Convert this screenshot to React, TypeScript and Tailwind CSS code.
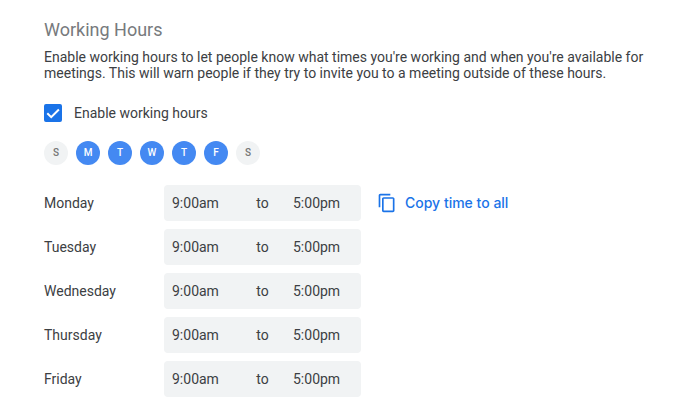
import React, { useState } from 'react';
import clsx from 'clsx';

type Day = {
  name: string;
  letter: string;
};

const DAYS: Day[] = [
  { name: 'Sunday', letter: 'S' },
  { name: 'Monday', letter: 'M' },
  { name: 'Tuesday', letter: 'T' },
  { name: 'Wednesday', letter: 'W' },
  { name: 'Thursday', letter: 'T' },
  { name: 'Friday', letter: 'F' },
  { name: 'Saturday', letter: 'S' },
];

type Hours = {
  start: string;
  end: string;
};

const CopyIcon: React.FC = () => (
  <svg viewBox="0 0 24 24" className="size-5 shrink-0" fill="currentColor" aria-hidden="true">
    <path d="M16 1H4C2.9 1 2 1.9 2 3v14h2V3h12V1zm3 4H8C6.9 5 6 5.9 6 7v14c0 1.1.9 2 2 2h11c1.1 0 2-.9 2-2V7c0-1.1-.9-2-2-2zm0 16H8V7h11v14z" />
  </svg>
);

type DayToggleProps = {
  day: Day;
  active: boolean;
  onClick: () => void;
};

const DayToggle: React.FC<Readonly<DayToggleProps>> = ({ day, active, onClick }) => (
  <button
    type="button"
    aria-label={day.name}
    aria-pressed={active}
    onClick={onClick}
    className={clsx(
      'flex size-6 items-center justify-center rounded-full text-[10px] font-medium',
      active ? 'bg-[#4489f2] text-white' : 'bg-[#f1f3f4] text-[#757575]',
    )}
  >
    {day.letter}
  </button>
);

type HoursRowProps = {
  day: string;
  hours: Hours;
  onChange: (hours: Hours) => void;
  onCopy?: () => void;
};

const HoursRow: React.FC<Readonly<HoursRowProps>> = ({ day, hours, onChange, onCopy }) => (
  <div className="flex items-center">
    <span className="w-[120px] shrink-0">{day}</span>
    <div className="flex h-9 items-center rounded bg-[#f1f3f4]">
      <input
        aria-label={`${day} start time`}
        value={hours.start}
        onChange={(e) => onChange({ ...hours, start: e.target.value })}
        className="h-9 w-[76px] bg-transparent pl-2 outline-none"
      />
      <span className="w-[45px] text-center">to</span>
      <input
        aria-label={`${day} end time`}
        value={hours.end}
        onChange={(e) => onChange({ ...hours, end: e.target.value })}
        className="h-9 w-[76px] bg-transparent pl-2 outline-none"
      />
    </div>
    {onCopy && (
      <button
        type="button"
        onClick={onCopy}
        className="ml-4 flex items-center gap-2 font-['Inter',sans-serif] text-sm font-medium text-[#1a73e8]"
      >
        <CopyIcon />
        Copy time to all
      </button>
    )}
  </div>
);

export default function App() {
  const [enabled, setEnabled] = useState(true);
  const [active, setActive] = useState([false, true, true, true, true, true, false]);
  const [hours, setHours] = useState<Hours[]>(DAYS.map(() => ({ start: '9:00am', end: '5:00pm' })));

  const toggleDay = (index: number) => setActive(active.map((on, i) => (i === index ? !on : on)));
  const updateHours = (index: number, next: Hours) => setHours(hours.map((h, i) => (i === index ? next : h)));
  const firstActive = active.indexOf(true);

  return (
    <main className="min-h-screen bg-white px-11 pt-[18px] pb-[15px] font-['Roboto',sans-serif] text-sm text-[#3c4043]">
      <h1 className="text-lg leading-6 text-[#777a7d]">Working Hours</h1>
      <p className="mt-[7px] leading-4">
        Enable working hours to let people know what times you're working and when you're available for meetings. This
        will warn people if they try to invite you to a meeting outside of these hours.
      </p>

      <label className="mt-[22px] flex w-fit items-center gap-3">
        <span className="grid size-[18px]">
          <input
            type="checkbox"
            checked={enabled}
            onChange={(e) => setEnabled(e.target.checked)}
            className="peer col-start-1 row-start-1 size-[18px] appearance-none rounded-xs border-2 border-[#5f6368] checked:border-[#1a73e8] checked:bg-[#1a73e8]"
          />
          <svg
            viewBox="0 0 18 18"
            className="pointer-events-none invisible col-start-1 row-start-1 size-[18px] peer-checked:visible"
            fill="none"
            stroke="white"
            strokeWidth="2"
            aria-hidden="true"
          >
            <path d="M3.3 9.3 7.2 13.2 14.9 5.5" />
          </svg>
        </span>
        Enable working hours
      </label>

      <div className="mt-[18px] flex gap-2">
        {DAYS.map((day, i) => (
          <DayToggle key={day.name} day={day} active={active[i]} onClick={() => toggleDay(i)} />
        ))}
      </div>

      <div className="mt-5 flex flex-col gap-2">
        {DAYS.map(
          (day, i) =>
            active[i] && (
              <HoursRow
                key={day.name}
                day={day.name}
                hours={hours[i]}
                onChange={(next) => updateHours(i, next)}
                onCopy={i === firstActive ? () => setHours(DAYS.map(() => hours[i])) : undefined}
              />
            ),
        )}
      </div>
    </main>
  );
}
